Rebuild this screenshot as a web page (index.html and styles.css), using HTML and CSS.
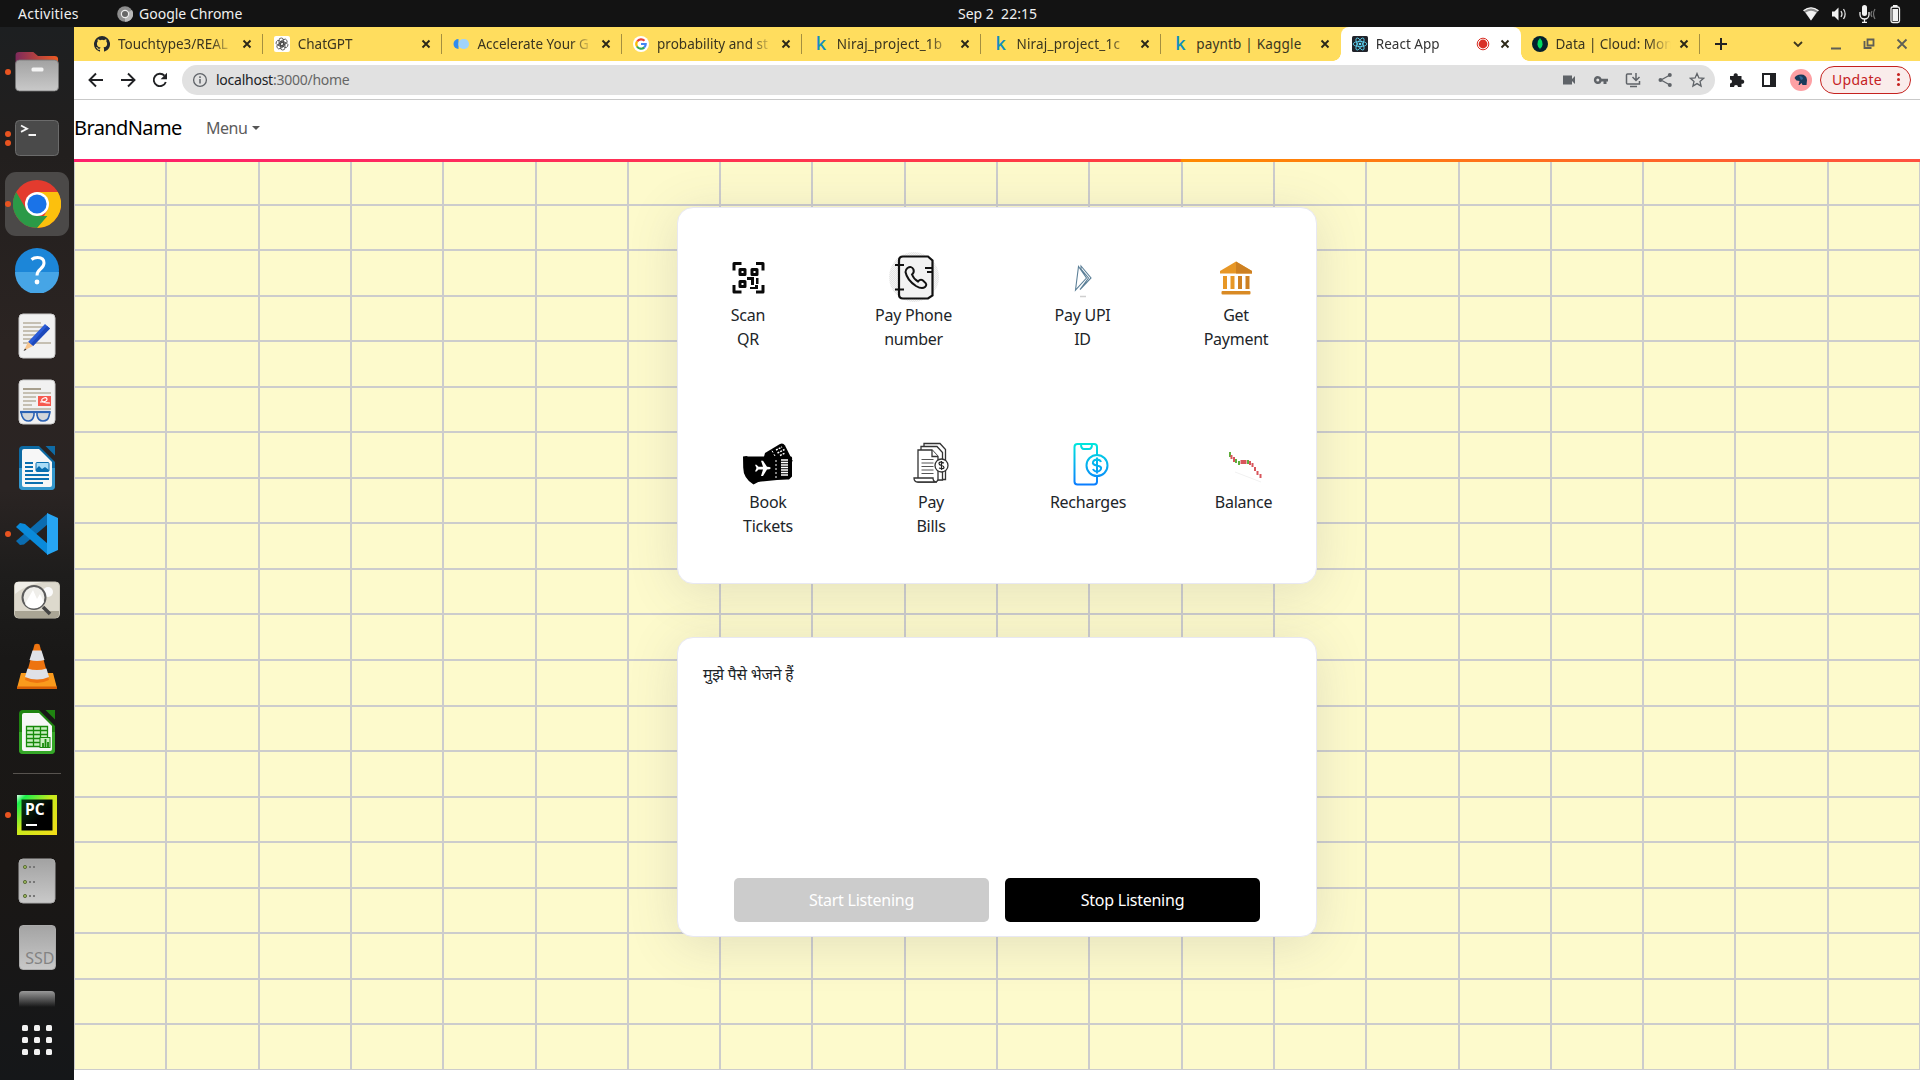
FILE: index.html
```html
<!DOCTYPE html>
<html lang="en">
<head>
<meta charset="utf-8">
<title>React App</title>
<link rel="stylesheet" href="styles.css">
</head>
<body>
<svg class="defs" width="0" height="0">
  <defs>
    <linearGradient id="grey" x1="0" y1="0" x2="0" y2="1"><stop offset="0" stop-color="#a2a2a2"/><stop offset="1" stop-color="#c9c9c9"/></linearGradient>
    <linearGradient id="folder" x1="0" y1="0" x2="1" y2="0"><stop offset="0" stop-color="#7d2a5c"/><stop offset="1" stop-color="#ee5a22"/></linearGradient>
    <linearGradient id="fade" x1="0" y1="0" x2="0" y2="1"><stop offset="0" stop-color="#999"/><stop offset="1" stop-color="#999" stop-opacity="0"/></linearGradient>
    <linearGradient id="cyan" gradientUnits="userSpaceOnUse" x1="0" y1="4" x2="0" y2="46"><stop offset="0" stop-color="#00e8dc"/><stop offset="1" stop-color="#0a7cff"/></linearGradient>
    <linearGradient id="pc" x1="0" y1="0" x2="1" y2="1"><stop offset="0" stop-color="#d8ffe8"/><stop offset=".12" stop-color="#1bf04c"/><stop offset=".45" stop-color="#c8ea1c"/><stop offset="1" stop-color="#f5dc18"/></linearGradient>
    <linearGradient id="pcin" x1="0" y1="0" x2="1" y2="1"><stop offset="0" stop-color="#0a3a14"/><stop offset=".6" stop-color="#000"/></linearGradient>
    <pattern id="check" width="2" height="2" patternUnits="userSpaceOnUse"><rect width="2" height="2" fill="#f6f6f6"/><rect width="1" height="1" fill="#e6e6e6"/><rect x="1" y="1" width="1" height="1" fill="#e6e6e6"/></pattern>
    <symbol id="x" viewBox="0 0 12 12"><path d="M2.500 2.500l7 7M9.500 2.500l-7 7" stroke="currentColor" stroke-width="1.900"/></symbol>
  </defs>
</svg>

<header class="topbar">
  <span class="activities">Activities</span>
  <svg class="app-icon" width="16" height="20" viewBox="0 0 16 20"><circle cx="8" cy="10" r="7.800" fill="#8d8d8d"/><path d="M8 10L15 6a7.800 7.800 0 0 1-7 11.800z" fill="#b9b9b9"/><circle cx="8" cy="10" r="3.600" fill="#666" stroke="#eee" stroke-width="1.200"/></svg>
  <span class="app-name">Google Chrome</span>
  <span class="clock">Sep 2&nbsp; 22:15</span>
  <div class="status">
    <svg width="18" height="18" viewBox="0 0 18 18"><path d="M1.500 5.500Q9 -.500 16.500 5.500L9 15.500z" fill="#8d8d8d"/><path d="M3.600 7.500Q9 4 14.400 7.500L9 15.500z" fill="#f2f2f2"/><path d="M1.500 5.800Q9 0 16.500 5.800" fill="none" stroke="#f2f2f2" stroke-width="1.400"/></svg>
    <svg width="18" height="18" viewBox="0 0 18 18"><path d="M2 6.500h2.500L8.500 2.500v13L4.500 11.500H2z" fill="#f2f2f2"/><path d="M11 6q2 3 0 6M13.500 4q3.300 5 0 10" fill="none" stroke="#ddd" stroke-width="1.300"/></svg>
    <svg width="18" height="18" viewBox="0 0 18 18"><rect x="4" y="0" width="5" height="11" rx="2.500" fill="#f2f2f2"/><path d="M2 7v2.500a4.500 4.500 0 0 0 9 0V7M6.500 14v3M4 17.300h5" fill="none" stroke="#f2f2f2" stroke-width="1.300"/><path d="M14 6q-2 3 0 6M17 4q-3 5 0 10" fill="none" stroke="#777" stroke-width="1.200"/></svg>
    <svg class="battery" width="18" height="20" viewBox="0 0 18 20"><rect x="5" y="3" width="8.500" height="15.500" rx="1.800" fill="none" stroke="#f2f2f2" stroke-width="1.300"/><rect x="6.500" y="5" width="5.500" height="12" fill="#f2f2f2"/><rect x="7" y="1" width="4.500" height="2" fill="#f2f2f2"/></svg>
  </div>
</header>

<div class="desktop">
  <aside class="dock">
    <div class="slot"><i class="dots"><b></b></i>
      <svg width="48" height="48" viewBox="0 0 48 48"><path d="M6 14V7a3 3 0 0 1 3-3h12l4 4h14a3 3 0 0 1 3 3v10H6z" fill="url(#folder)" transform="translate(-4.500 0)scale(1.180 1)"/><rect x="2.500" y="12" width="43" height="31" rx="4" fill="url(#grey)" stroke="#777" stroke-width=".800"/><rect x="18.500" y="19.500" width="12" height="4" rx="1.500" fill="#f4f4f4"/></svg></div>
    <div class="slot"><i class="dots"><b></b><b></b></i>
      <svg width="48" height="48" viewBox="0 0 48 48"><rect x="2.500" y="6.500" width="43" height="35" rx="4" fill="#4a4a4a" stroke="#6b6b6b"/><path d="M8 11.500l6 3.200-6 3.200M15.500 21h7.500" fill="none" stroke="#f5f5f5" stroke-width="1.800"/></svg></div>
    <div class="slot"><i class="dots"><b></b></i>
      <div class="focused"><svg width="48" height="48" viewBox="0 0 48 48"><circle cx="24" cy="24" r="24" fill="#e33b2e"/><path d="M24 12H44.800A24 24 0 0 1 24 48L34.400 30z" fill="#fcc00d"/><path d="M3.200 12L13.600 30 24 36h10.400L24 48A24 24 0 0 1 3.200 12z" fill="#2b9a47"/><circle cx="24" cy="24" r="12" fill="#fff"/><circle cx="24" cy="24" r="9.600" fill="#1a73e8"/></svg></div></div>
    <div class="slot">
      <svg width="46" height="46" viewBox="0 0 46 46"><circle cx="23" cy="23" r="22" fill="#1c86d8"/><path d="M1 25a22 22 0 0 0 44 0z" fill="#46a5e6"/><path d="M17.500 12.500q2.500-2 6-2 6.500 0 6.500 5.500 0 3-3.500 6-3.500 2.800-3.500 6.500" fill="none" stroke="#fff" stroke-width="3"/><circle cx="23" cy="35" r="2.400" fill="#fff"/></svg></div>
    <div class="slot">
      <svg width="38" height="46" viewBox="0 0 38 46"><rect x="1" y="1" width="36" height="44" rx="4" fill="#f1f1f1" stroke="#ccc"/><path d="M5 10h18M5 14h22M5 18h18M5 22h16M5 26h12M5 30h28" stroke="#c5bfb2" stroke-width="2"/><path d="M10 29L27 11l5 4.500L15 33z" fill="#2a5bd7"/><path d="M29 13l3 2.500L15 33l-2-2z" fill="#1d48ba"/><path d="M10 29l5 4-9 4.500z" fill="#f6c48c"/><path d="M7 35.500l1.500 1.300L5.500 38z" fill="#333"/></svg></div>
    <div class="slot">
      <svg width="38" height="46" viewBox="0 0 38 46"><rect x="1" y="1" width="36" height="44" rx="4" fill="#f1f1f1" stroke="#ccc"/><path d="M5 10h18" stroke="#a79f8e" stroke-width="2"/><path d="M5 14h28M5 18h13M5 22h13M5 26h9M5 30h28" stroke="#c5bfb2" stroke-width="2"/><rect x="20" y="17" width="13" height="10" fill="#f6594f"/><path d="M22 23q7 0 7-2.500T26 19t-2 3 8 2" fill="none" stroke="#fff" stroke-width="1.200"/><path d="M3 33h13v3q-1 6-5.500 6T4 37zM19 33h13l-1 4q-1 5-6 5t-6-6z" fill="#d3d6da" stroke="#2b62b4" stroke-width="1.600"/><path d="M2 33h30" stroke="#2b62b4" stroke-width="2.200"/></svg></div>
    <div class="slot">
      <svg width="38" height="46" viewBox="0 0 38 46"><path d="M5 1h16l16 16v24a4 4 0 0 1-4 4H5a4 4 0 0 1-4-4V5a4 4 0 0 1 4-4z" fill="#0d6aa3"/><path d="M1 23h36v18a4 4 0 0 1-4 4H5a4 4 0 0 1-4-4z" fill="#3397cd"/><path d="M6 4h15l13 13v23a2 2 0 0 1-2 2H6a2 2 0 0 1-2-2V6a2 2 0 0 1 2-2z" fill="#f7f7f7"/><path d="M27.500 1H37v9.500z" fill="#0f6ba5"/><path d="M7 18h8M7 22h8M7 26h8M7 30h24M7 34h24M7 38h18" stroke="#0a6fb0" stroke-width="2"/><rect x="18" y="17.500" width="13" height="9" rx="1" fill="#a9dcf7" stroke="#0a6fb0"/><path d="M18 26v-2l3-3 3 3 3-2 4 3v1z" fill="#0a6fb0"/></svg></div>
    <div class="slot"><i class="dots"><b></b></i>
      <svg width="42" height="42" viewBox="0 0 42 42"><path d="M0 28l4 4 4-.500L32 11V0z" fill="#0b6cb0"/><path d="M0 14l4-4 5 1L32 31v11z" fill="#0a8ada"/><path d="M31 0l11 5v32l-11 5z" fill="#27a5f3"/></svg></div>
    <div class="slot">
      <svg width="48" height="40" viewBox="0 0 48 40"><rect x="1.500" y="2" width="45" height="36" rx="4" fill="#ddd9cd" stroke="#c9c5b8"/><path d="M2 14Q14 4 30 2H5a3 3 0 0 0-3 3z" fill="#f0eee8"/><path d="M2 31h44v3a4 4 0 0 1-4 4H6a4 4 0 0 1-4-4z" fill="#aaa595"/><circle cx="35" cy="12" r="5" fill="#fbfbfb"/><circle cx="21" cy="17.500" r="11.500" fill="#efeeea" stroke="#5c5c5c" stroke-width="2"/><path d="M12 24l8-14 4 9 3-5 4 8q-3 6-10 6.500-6 0-9-4.500z" fill="#fff"/><path d="M30 27l7 7" stroke="#444" stroke-width="3.500"/></svg></div>
    <div class="slot">
      <svg width="42" height="46" viewBox="0 0 42 46"><path d="M5 30h32l4 15H1z" fill="#f99a1c"/><path d="M1 43.500h40V46H1z" fill="#d55f06"/><path d="M18.500 1.500q2.500-1.500 5 0L33 37q-12 6-24 0z" fill="#ee7410"/><path d="M16.500 7.500h9l3 9.500q-7.500 2-15 0zM11.500 25.500q9.500 3 19 0l2.500 8.500q-12 5-24 0z" fill="#dfe1e6"/></svg></div>
    <div class="slot">
      <svg width="38" height="46" viewBox="0 0 38 46"><path d="M5 1h16l16 16v24a4 4 0 0 1-4 4H5a4 4 0 0 1-4-4V5a4 4 0 0 1 4-4z" fill="#1f8411"/><path d="M1 23h36v18a4 4 0 0 1-4 4H5a4 4 0 0 1-4-4z" fill="#35a728"/><path d="M6 4h15l13 13v23a2 2 0 0 1-2 2H6a2 2 0 0 1-2-2V6a2 2 0 0 1 2-2z" fill="#f7f7f7"/><path d="M27.500 1H37v9.500z" fill="#1f8411"/><path d="M8.500 17.500h21v20h-21zM8.500 21.500h21M8.500 25.500h21M8.500 29.500h21M8.500 33.500h21M15.500 17.500v20M22.500 17.500v20" fill="#c9efc0" stroke="#178a0b" stroke-width="1.300"/><rect x="22" y="28.500" width="10" height="10" fill="#c9efc0" stroke="#178a0b"/><path d="M25 38v-4M27.500 38v-8M30 38v-5" stroke="#178a0b" stroke-width="1.800"/></svg></div>
    <hr class="rule">
    <div class="slot"><i class="dots"><b></b></i>
      <div class="pycharm"><svg width="40" height="40" viewBox="0 0 40 40"><rect width="40" height="40" fill="url(#pc)"/><rect x="4.500" y="4.500" width="31" height="31" fill="url(#pcin)"/><rect x="9" y="29" width="11" height="2" fill="#fff"/></svg><span>PC</span></div></div>
    <div class="slot">
      <svg width="38" height="46" viewBox="0 0 38 46"><rect x="1" y="1" width="36" height="44" rx="4" fill="url(#grey)" stroke="#aaa"/><g fill="#9ab85a" stroke="#5f6e40"><circle cx="7" cy="9" r="1.600"/><circle cx="7" cy="24" r="1.600"/><circle cx="7" cy="38" r="1.600"/></g><path d="M11 9h6M11 24h6M11 38h6" stroke="#777" stroke-width="1.800" stroke-dasharray="2"/></svg></div>
    <div class="slot">
      <div class="ssd"><span>SSD</span></div></div>
    <div class="slot slot-cut">
      <svg width="38" height="17" viewBox="0 0 38 17"><path d="M1 17V5a4 4 0 0 1 4-4h28a4 4 0 0 1 4 4v12z" fill="url(#fade)"/></svg></div>
    <div class="slot">
      <div class="apps"><b></b><b></b><b></b><b></b><b></b><b></b><b></b><b></b><b></b></div></div>
  </aside>

  <main class="window">
    <div class="tabstrip">
      <div class="tab"><svg class="fav" viewBox="0 0 16 16"><path fill="#24292f" d="M8 0a8 8 0 0 0-2.530 15.590c.4.070.550-.170.550-.380v-1.490c-2.010.370-2.530-.490-2.690-.940-.090-.230-.480-.940-.820-1.130-.280-.150-.680-.520-.010-.530.630-.010 1.080.580 1.230.820.720 1.210 1.870.870 2.330.660.070-.520.280-.870.510-1.070-1.780-.200-3.640-.890-3.640-3.950 0-.870.310-1.590.820-2.150-.080-.200-.360-1.020.080-2.120 0 0 .670-.210 2.200.820a7.400 7.400 0 0 1 4 0c1.530-1.040 2.200-.820 2.200-.820.440 1.100.160 1.920.080 2.120.510.560.820 1.270.820 2.150 0 3.070-1.870 3.750-3.650 3.950.290.250.540.730.540 1.480v2.200c0 .210.150.460.550.380A8 8 0 0 0 8 0z"/></svg><span class="title">Touchtype3/REAL</span><svg class="close"><use href="#x"/></svg></div>
      <div class="tab"><svg class="fav" viewBox="0 0 16 16"><rect width="16" height="16" rx="2" fill="#fff"/><g fill="none" stroke="#444" stroke-width=".8"><rect x="5" y="2" width="4.500" height="8" rx="2.200"/><rect x="5" y="2" width="4.500" height="8" rx="2.200" transform="rotate(60 8 8)"/><rect x="5" y="2" width="4.500" height="8" rx="2.200" transform="rotate(120 8 8)"/><rect x="5" y="2" width="4.500" height="8" rx="2.200" transform="rotate(180 8 8)"/><rect x="5" y="2" width="4.500" height="8" rx="2.200" transform="rotate(240 8 8)"/><rect x="5" y="2" width="4.500" height="8" rx="2.200" transform="rotate(300 8 8)"/></g></svg><span class="title">ChatGPT</span><svg class="close"><use href="#x"/></svg></div>
      <div class="tab"><svg class="fav" viewBox="0 0 16 16"><path d="M5.500 3v10A5 5 0 0 1 5.500 3z" fill="#2e8cf0"/><rect x="5.500" y="3" width="10.500" height="10" rx="4.800" fill="#9fd3fb"/></svg><span class="title">Accelerate Your G</span><svg class="close"><use href="#x"/></svg></div>
      <div class="tab"><svg class="fav" viewBox="0 0 16 16"><circle cx="8" cy="8" r="8" fill="#fff"/><g fill="none" stroke-width="2.200"><path d="M4.200 5.500A4.700 4.700 0 0 1 11.500 4.700" stroke="#ea4335"/><path d="M4.100 10.600A4.700 4.700 0 0 1 4.100 5.400" stroke="#fbbc05"/><path d="M11.300 11.400A4.700 4.700 0 0 1 4 10.500" stroke="#34a853"/><path d="M8 8h4.700A4.700 4.700 0 0 1 11.200 11.500" stroke="#4285f4"/></g></svg><span class="title">probability and st</span><svg class="close"><use href="#x"/></svg></div>
      <div class="tab"><span class="fav kaggle">k</span><span class="title title-wide">Niraj_project_1b</span><svg class="close"><use href="#x"/></svg></div>
      <div class="tab"><span class="fav kaggle">k</span><span class="title title-wide">Niraj_project_1c</span><svg class="close"><use href="#x"/></svg></div>
      <div class="tab tab-last"><span class="fav kaggle">k</span><span class="title title-full">payntb | Kaggle</span><svg class="close"><use href="#x"/></svg></div>
      <div class="tab tab-active"><svg class="fav" viewBox="0 0 16 16"><rect width="16" height="16" rx="1.500" fill="#20232a"/><g fill="none" stroke="#61dafb" stroke-width=".8"><ellipse cx="8" cy="8" rx="6.800" ry="2.600"/><ellipse cx="8" cy="8" rx="6.800" ry="2.600" transform="rotate(60 8 8)"/><ellipse cx="8" cy="8" rx="6.800" ry="2.600" transform="rotate(120 8 8)"/></g><circle cx="8" cy="8" r="1.300" fill="#61dafb"/></svg><span class="title">React App</span><svg class="rec" width="14" height="14" viewBox="0 0 14 14"><circle cx="7" cy="7" r="5.800" fill="none" stroke="#d93025" stroke-width="1"/><circle cx="7" cy="7" r="4.400" fill="#d93025"/></svg><svg class="close"><use href="#x"/></svg></div>
      <div class="tab"><svg class="fav" viewBox="0 0 16 16"><circle cx="8" cy="8" r="8" fill="#04202d"/><path d="M8 2q3 3 2.600 6.500Q10.300 11 8.300 12.500L8 14l-.300-1.500Q5.700 11 5.400 8.500 5 5 8 2z" fill="#00d95f"/></svg><span class="title">Data | Cloud: Mon</span><svg class="close"><use href="#x"/></svg></div>
      <svg class="plus" width="16" height="16" viewBox="0 0 16 16"><path d="M8 2v12M2 8h12" stroke="#222" stroke-width="2"/></svg>
      <div class="winctl">
        <svg width="16" height="16" viewBox="0 0 16 16"><path d="M4 6l4 4 4-4" fill="none" stroke="#3c3620" stroke-width="1.800"/></svg>
        <svg width="16" height="16" viewBox="0 0 16 16"><path d="M3 12.500h10" stroke="#5f5f55" stroke-width="2"/></svg>
        <svg width="16" height="16" viewBox="0 0 16 16"><path d="M6.500 3.500h6v6h-6zM3.500 5v7h7" fill="none" stroke="#5f5f55" stroke-width="1.800"/></svg>
        <svg width="16" height="16" viewBox="0 0 16 16"><path d="M3.500 3.500l9 9M12.500 3.500l-9 9" stroke="#5f5f55" stroke-width="1.800"/></svg>
      </div>
    </div>

    <div class="toolbar">
      <div class="nav">
        <svg viewBox="0 0 16 16"><path d="M15 8H2M8 1.500L1.500 8 8 14.500" fill="none" stroke="#202124" stroke-width="1.900"/></svg>
        <svg viewBox="0 0 16 16"><path d="M1 8h13M8 1.500L14.500 8 8 14.500" fill="none" stroke="#202124" stroke-width="1.900"/></svg>
        <svg viewBox="0 0 16 16"><path d="M13.800 10A6.200 6.200 0 1 1 12.500 3.700" fill="none" stroke="#202124" stroke-width="1.900"/><path d="M15 .800v6.400H8.600z" fill="#202124"/></svg>
      </div>
      <div class="omnibox">
        <svg width="16" height="16" viewBox="0 0 16 16"><circle cx="8" cy="8" r="6.400" fill="none" stroke="#5f6368" stroke-width="1.300"/><path d="M8 7v4.500M8 4.300v1.600" stroke="#5f6368" stroke-width="1.500"/></svg>
        <span class="url"><b>localhost</b>:3000/home</span>
        <div class="actions">
          <svg viewBox="0 0 16 16"><path d="M2 3.500h9V7l3-3v8l-3-3v3.500H2z" fill="#5f6368"/></svg>
          <svg viewBox="0 0 16 16"><path d="M4.800 4a4 4 0 0 1 3.800 2.700H15V9.500h-1.500V12h-3V9.500H8.600A4 4 0 1 1 4.800 4zm0 2.500a1.500 1.500 0 1 0 0 3 1.500 1.500 0 0 0 0-3z" fill="#5f6368"/></svg>
          <svg viewBox="0 0 16 16"><path d="M7 2H2.500Q1.500 2 1.500 3v8q0 1 1 1h12V9M5 14.500h7M11 1v7M7.500 5L11 8.500 14.500 5" fill="none" stroke="#5f6368" stroke-width="1.500"/></svg>
          <svg viewBox="0 0 16 16"><path d="M13 3L4 8l9 5" fill="none" stroke="#5f6368" stroke-width="1.300"/><g fill="#5f6368"><circle cx="12.800" cy="3" r="2"/><circle cx="3.500" cy="8" r="2"/><circle cx="12.800" cy="13" r="2"/></g></svg>
          <svg viewBox="0 0 16 16"><path d="M8 1.500l1.900 4.400 4.700.4-3.600 3.100 1.100 4.700L8 11.600l-4.100 2.500L5 9.400 1.400 6.300l4.700-.4z" fill="none" stroke="#5f6368" stroke-width="1.300"/></svg>
        </div>
      </div>
      <div class="extras">
        <svg width="16" height="16" viewBox="0 0 16 16"><path d="M1 4h3.700a2.100 2.100 0 1 1 4 0H12.500v3.700a2.100 2.100 0 1 1 0 4V15H9a2 2 0 1 0-4 0H1v-3.500a2 2 0 1 0 0-4z" fill="#202124"/></svg>
        <svg width="16" height="16" viewBox="0 0 16 16"><path d="M2 2h12v12H2z" fill="none" stroke="#202124" stroke-width="2"/><path d="M9 2h5v12H9z" fill="#202124"/></svg>
        <svg width="22" height="22" viewBox="0 0 22 22"><circle cx="11" cy="11" r="11" fill="#fda0a4"/><path d="M4.500 9Q6 5.500 11 5.500q5.500 0 6 5.500l-.5 5h-4l-1-2-2 2H8.500l1-4L6.500 11.500z" fill="#183a5a"/><path d="M9 7q4 0 4 3l-2 1z" fill="#2c6496"/></svg>
        <div class="update"><span>Update</span><i></i></div>
      </div>
    </div>

    <nav class="navbar">
      <a class="brand">BrandName</a>
      <a class="menu">Menu<i class="caret"></i></a>
    </nav>

    <section class="page">
      <div class="mesh" id="mesh"></div>
      <div class="stack">
        <div class="card services">
          <div class="row row-top">
            <div class="item"><svg viewBox="0 0 50 50"><g fill="none" stroke="#0a0a0a" stroke-width="3" stroke-linejoin="round"><path d="M11 18.500v-7h7.500M33 11.500h7v7M40 33v7h-7M18.500 40H11v-7"/><path d="M17 17.500h5v5h-5zM29 17.500h5v5h-5zM17 29.500h5v5h-5z"/></g><path d="M24 25h7v8h-3v-5h-4zM33 26h2.500v6H33zM27 35h5v-2h3v4h-8z" fill="#0a0a0a"/></svg>Scan<br>QR</div>
            <div class="item"><svg viewBox="0 0 50 50"><circle cx="25" cy="25" r="25" fill="url(#check)"/><path d="M14 4.500h25l4.500 4v35L39 46.500H14q-4 0-4-4V8.500q0-4 4-4z" fill="#f2f2f2" stroke="#111" stroke-width="2.200"/><path d="M6 13h9M6 37.500h9M36 16h8M38 20h6" stroke="#111" stroke-width="2"/><path d="M18.500 16q4-2.500 6 1.500 1 3-1.500 5 2 5 6 7 3-3.500 6 0 4 3 1 5.500-3 2.500-9-1Q18 28 16.500 20q0-2.500 2-4z" fill="none" stroke="#111" stroke-width="2"/></svg>Pay Phone<br>number</div>
            <div class="item"><svg viewBox="0 0 50 50"><path d="M20.500 14.500L17.500 38l11-12zM23 14l10 12-11 11.500 8.500-11.500-7.500-9z" fill="none" stroke="#5b7f97" stroke-width="1.100"/><path d="M22 44.500h6" stroke="#cfcfcf" stroke-width="1.500"/></svg>Pay UPI<br>ID</div>
            <div class="item"><svg viewBox="0 0 50 50"><path d="M25 9.500L41 19v2.500H9V19z" fill="#e79726"/><path d="M25 9.500L41 19v2.500H25z" fill="#cd8022"/><path d="M12 24h4v13h-4zM19.500 24h4v13h-4z" fill="#e79726"/><path d="M27 24h4v13h-4zM34.500 24h4v13h-4z" fill="#cd8022"/><rect x="10.500" y="39" width="29" height="3.500" rx="1" fill="#d98a24"/></svg>Get<br>Payment</div>
          </div>
          <div class="row row-bottom">
            <div class="item"><svg viewBox="0 0 50 50"><path d="M22 14L37 5q3-1.500 5 1.500l7.500 15L44 40l-30 3z"/><path d="M0 17.500q4-1 5 0h22q4-1 8 0h13q1.500 0 1 3v17l-3 3H20L10.500 45.500Q0 39 .200 28z"/><path d="M32 17l-4-7M33 39V19" stroke="#fff" stroke-width="1" stroke-dasharray="2"/><path d="M33 11l6-3M34.500 14l7-3.500M37 16.500l5-2.500" stroke="#fff" stroke-width="1.400" stroke-dasharray="2 1"/><path d="M38 21h7M38 23.500h7M38 26h7M38 28.500h7M38 31h7M38 33.500h7M38 36h7" stroke="#fff" stroke-width="1.500"/><path d="M28 29q-1-1.300-4-1.300l-4-6h-2l2 6h-4.500l-2-2H12l1.500 3.300L12 32.500h1.500l2-2H20l-2 6.500h2l4-6.500q3 0 4-1.500z" fill="#fff"/></svg>Book<br>Tickets</div>
            <div class="item"><svg viewBox="0 0 50 50"><g fill="#fff" stroke="#333" stroke-width="1.300"><path d="M18 4.500h16l5.500 6v30H18z"/><path d="M15 7.500h16l5.500 6V41H15z"/><path d="M12 11h14l6 6.500V40q0 3-4 3H12z"/><path d="M26 11v6.500h6"/><path d="M8 39h19q0 4 4 4H12q-4 0-4-4z"/><circle cx="35.500" cy="26.500" r="6.500"/></g><path d="M15.500 20.500h12M15.500 24h12M15.500 27.500h12M15.500 31h12M15.500 34.500h12" stroke="#555"/><path d="M38 24q-5-2-5 .5 0 1.500 2.500 2t2.500 2q0 2-5 .5M35.500 22v9" fill="none" stroke="#222" stroke-width="1.200"/></svg>Pay<br>Bills</div>
            <div class="item"><svg viewBox="0 0 50 50"><g fill="none" stroke="url(#cyan)" stroke-width="2"><path d="M34 16V8q0-3-3-3H14.500q-3 0-3 3v34.500q0 3 3 3H31q3 0 3-3v-6"/><path d="M18 5q0 5 3 5h5q3 0 3-5"/><circle cx="34" cy="26.500" r="10.500"/><path d="M38 23q-1-2.500-4-2.500t-4 2.500 4 3.500 4 3.500-4 2.500-4-2.500M34 18.500v16"/></g></svg>Recharges</div>
            <div class="item"><svg viewBox="0 0 50 50"><path d="M16 33l26 10" stroke="#f2f2f2" stroke-width="1"/><g stroke-width="2"><path d="M11 13v5M17 20v4M20 22v4M29 21v4" stroke="#5fae3c"/><path d="M12.500 16v4M15 18v5M22.500 21v4M24.500 21v4M26.500 21v4M31 22v4M33.500 24v4M36 28v4M38.500 32v4M41.500 35v4" stroke="#d8565c"/></g></svg>Balance</div>
          </div>
        </div>
        <div class="card voice">
          <p class="speech" lang="hi">मुझे पैसे भेजने हैं</p>
          <div class="buttons"><button class="btn" disabled>Start Listening</button><button class="btn">Stop Listening</button></div>
        </div>
      </div>
    </section>
  </main>
</div>
<script src="mesh.js"></script>
</body>
</html>
```
FILE: styles.css
```css
* { box-sizing: border-box; }
body { margin: 0; width: 1920px; height: 1080px; overflow: hidden; background: #fff; color: #212529; font-family: "Noto Sans", "Open Sans", sans-serif; display: flex; flex-direction: column; }
svg { display: block; flex: none; }
.defs { position: absolute; }

.topbar { height: 27px; flex: none; background: #131313; color: #f0f0f0; font-size: 14px; display: grid; grid-template-columns: 117px 22px 819px 1fr auto; align-items: center; padding: 0 16px 0 0; line-height: 27px; white-space: nowrap; }
.activities { padding-left: 18px; letter-spacing: .25px; }
.app-name { letter-spacing: 0; }
.clock { letter-spacing: 0; }
.status { display: flex; gap: 10px; align-items: center; }

.desktop { flex: 1; display: flex; min-height: 0; }
.dock { width: 74px; flex: none; padding-top: 12px; background: linear-gradient(#1d1f21 0, #221f1e 12%, #2b2422 30%, #2a2423 44%, #1e1d1c 52%, #191817 60%, #1a1715 80%, #151719 100%); }
.slot { position: relative; height: 66px; display: flex; align-items: center; justify-content: center; }
.slot-cut { height: 27px; align-items: flex-end; }
.dots { position: absolute; left: 5px; top: 0; bottom: 0; display: flex; flex-direction: column; gap: 3px; justify-content: center; }
.dots b { width: 6px; height: 6px; border-radius: 50%; background: #e95420; }
.focused { width: 64px; height: 64px; border-radius: 11px; background: #4b4948; display: flex; align-items: center; justify-content: center; }
.rule { width: 48px; height: 1px; border: 0; background: #57534f; margin: 8px auto; }
.pycharm { position: relative; }
.pycharm span { position: absolute; left: 8px; top: 4px; font: 700 15.500px/20px "Open Sans", sans-serif; color: #fff; }
.ssd { width: 37px; height: 45px; border-radius: 4px; border: 1px solid #aaa; background: linear-gradient(#a4a4a4, #c8c8c8); display: flex; align-items: flex-end; justify-content: flex-end; }
.ssd span { font-size: 16px; line-height: 21px; color: #838383; }
.apps { display: grid; grid-template-columns: repeat(3, 6px); gap: 6px; }
.apps b { width: 6px; height: 6px; border-radius: 1.500px; background: #f2f2f2; }

.window { flex: 1; min-width: 0; display: flex; flex-direction: column; background: #fff; }
.tabstrip { height: 34px; flex: none; background: #ffdd5e; padding-left: 9px; display: flex; align-items: center; color: #3a3520; font-size: 13.500px; }
.tab { position: relative; width: 179.700px; flex: none; height: 34px; padding: 0 10px 0 11px; display: flex; align-items: center; }
.tab:not(.tab-last):not(.tab-active)::after { content: ""; position: absolute; right: 0; top: 7px; height: 20px; width: 1px; background: #a58f3f; }
.tab-active { background: #fff; border-radius: 8px 8px 0 0; color: #333; }
.tab-active::before, .tab-active::after { content: ""; position: absolute; bottom: 0; width: 8px; height: 8px; }
.tab-active::before { left: -8px; background: radial-gradient(circle at 0 0, transparent 7.500px, #fff 8px); }
.tab-active::after { right: -8px; background: radial-gradient(circle at 100% 0, transparent 7.500px, #fff 8px); }
.fav { width: 16px; height: 16px; flex: none; }
.kaggle { color: #118fbf; font: 600 18px/15px "Open Sans", sans-serif; padding-left: 3px; }
.title { flex: 1; margin: 0 6px 0 8px; overflow: hidden; white-space: nowrap; -webkit-mask-image: linear-gradient(90deg, #000 80%, transparent 99%); mask-image: linear-gradient(90deg, #000 80%, transparent 99%); }
.title-wide { letter-spacing: .2px; }
.title-full { letter-spacing: .2px; -webkit-mask-image: none; mask-image: none; }
.close { width: 12px; height: 12px; color: #2c2818; }
.rec { margin-right: 9px; }
.plus { margin-left: 13px; }
.winctl { margin-left: auto; padding-right: 10px; display: flex; gap: 17px; }
.winctl svg:first-child { margin-right: 5px; }

.toolbar { height: 39px; flex: none; border-bottom: 1px solid #c9c9c9; padding-bottom: 1px; display: flex; align-items: center; font-size: 14px; }
.nav { width: 108px; padding-left: 14px; display: flex; gap: 16px; }
.nav svg { width: 16px; height: 16px; }
.omnibox { width: 1533px; height: 30px; border-radius: 15px; background: #e1e1e1; display: flex; align-items: center; padding: 0 10px; }
.url { margin-left: 8px; color: #666; letter-spacing: -.25px; }
.url b { font-weight: 400; color: #202124; }
.actions { margin-left: auto; display: flex; gap: 16px; }
.actions svg { width: 16px; height: 16px; }
.extras { margin-left: 14px; display: flex; align-items: center; gap: 16px; }
.extras > svg:nth-child(3) { margin: 0 -8px 0 -3px; }
.update { width: 91px; height: 28px; border: 1px solid #c5221f; border-radius: 14px; background: #faeceb; color: #c5221f; display: flex; align-items: center; padding-left: 11px; letter-spacing: .3px; }
.update i { width: 3px; height: 3px; border-radius: 50%; background: #c5221f; box-shadow: 0 -5px #c5221f, 0 5px #c5221f; margin-left: 15px; }

.navbar { height: 59px; flex: none; display: flex; align-items: flex-start; line-height: 56px; }
.brand { font-size: 20px; letter-spacing: -.6px; color: #000; width: 132px; height: 56px; }
.menu { font-size: 16px; letter-spacing: -.5px; color: #5c5c5c; display: flex; align-items: center; height: 56px; }
.caret { margin-left: 5px; border: 4px solid transparent; border-top-color: #555; border-bottom: 0; }

.page { position: relative; height: 911px; flex: none; padding-top: 48px; }
.page::before { content: ""; position: absolute; z-index: 1; left: 0; right: 0; top: 0; height: 3px; background: linear-gradient(90deg, #ff1f6b 0, #ff4040 59.900%, #ff8a00 60%, #ff5040 100%); }
.mesh { position: absolute; inset: 0; display: grid; grid-template: repeat(20, 1fr) / repeat(20, 1fr); }
.mesh i { background: #fdfacc; border: 1px solid #ccc; }
.stack { position: relative; display: flex; flex-direction: column; align-items: center; gap: 53px; }
.card { width: 640px; background: #fff; border: 1px solid #e8e8f2; border-radius: 16px; box-shadow: 0 7px 50px rgba(90, 90, 111, .16); }
.services { height: 377px; padding-top: 44px; }
.row { display: grid; height: 187px; font-size: 16px; line-height: 24px; letter-spacing: -.25px; text-align: center; }
.row-top { grid-template-columns: 140px 191px 147px 160px; }
.row-bottom { grid-template-columns: 180px 146px 168px 143px; }
.item svg { width: 50px; height: 50px; margin: 0 auto 1px; }
.voice { height: 300px; padding: 24px 24px 14px; display: flex; flex-direction: column; }
.speech { margin: 0 0 0 1px; font-size: 15.500px; line-height: 24px; letter-spacing: -.1px; }
.buttons { margin-top: auto; display: flex; gap: 16px; justify-content: center; }
.btn { width: 255px; height: 44px; border: 0; border-radius: 5px; background: #000; color: #fff; font: 16px/24px "Noto Sans", sans-serif; letter-spacing: -.25px; padding: 0; }
.btn:disabled { background: #ccc; }
```
FILE: mesh.js
```js
// Fill the page background with a 20 x 20 mesh of bordered cells.
const mesh = document.getElementById('mesh');
for (let i = 0; i < 400; i++) mesh.appendChild(document.createElement('i'));
```
